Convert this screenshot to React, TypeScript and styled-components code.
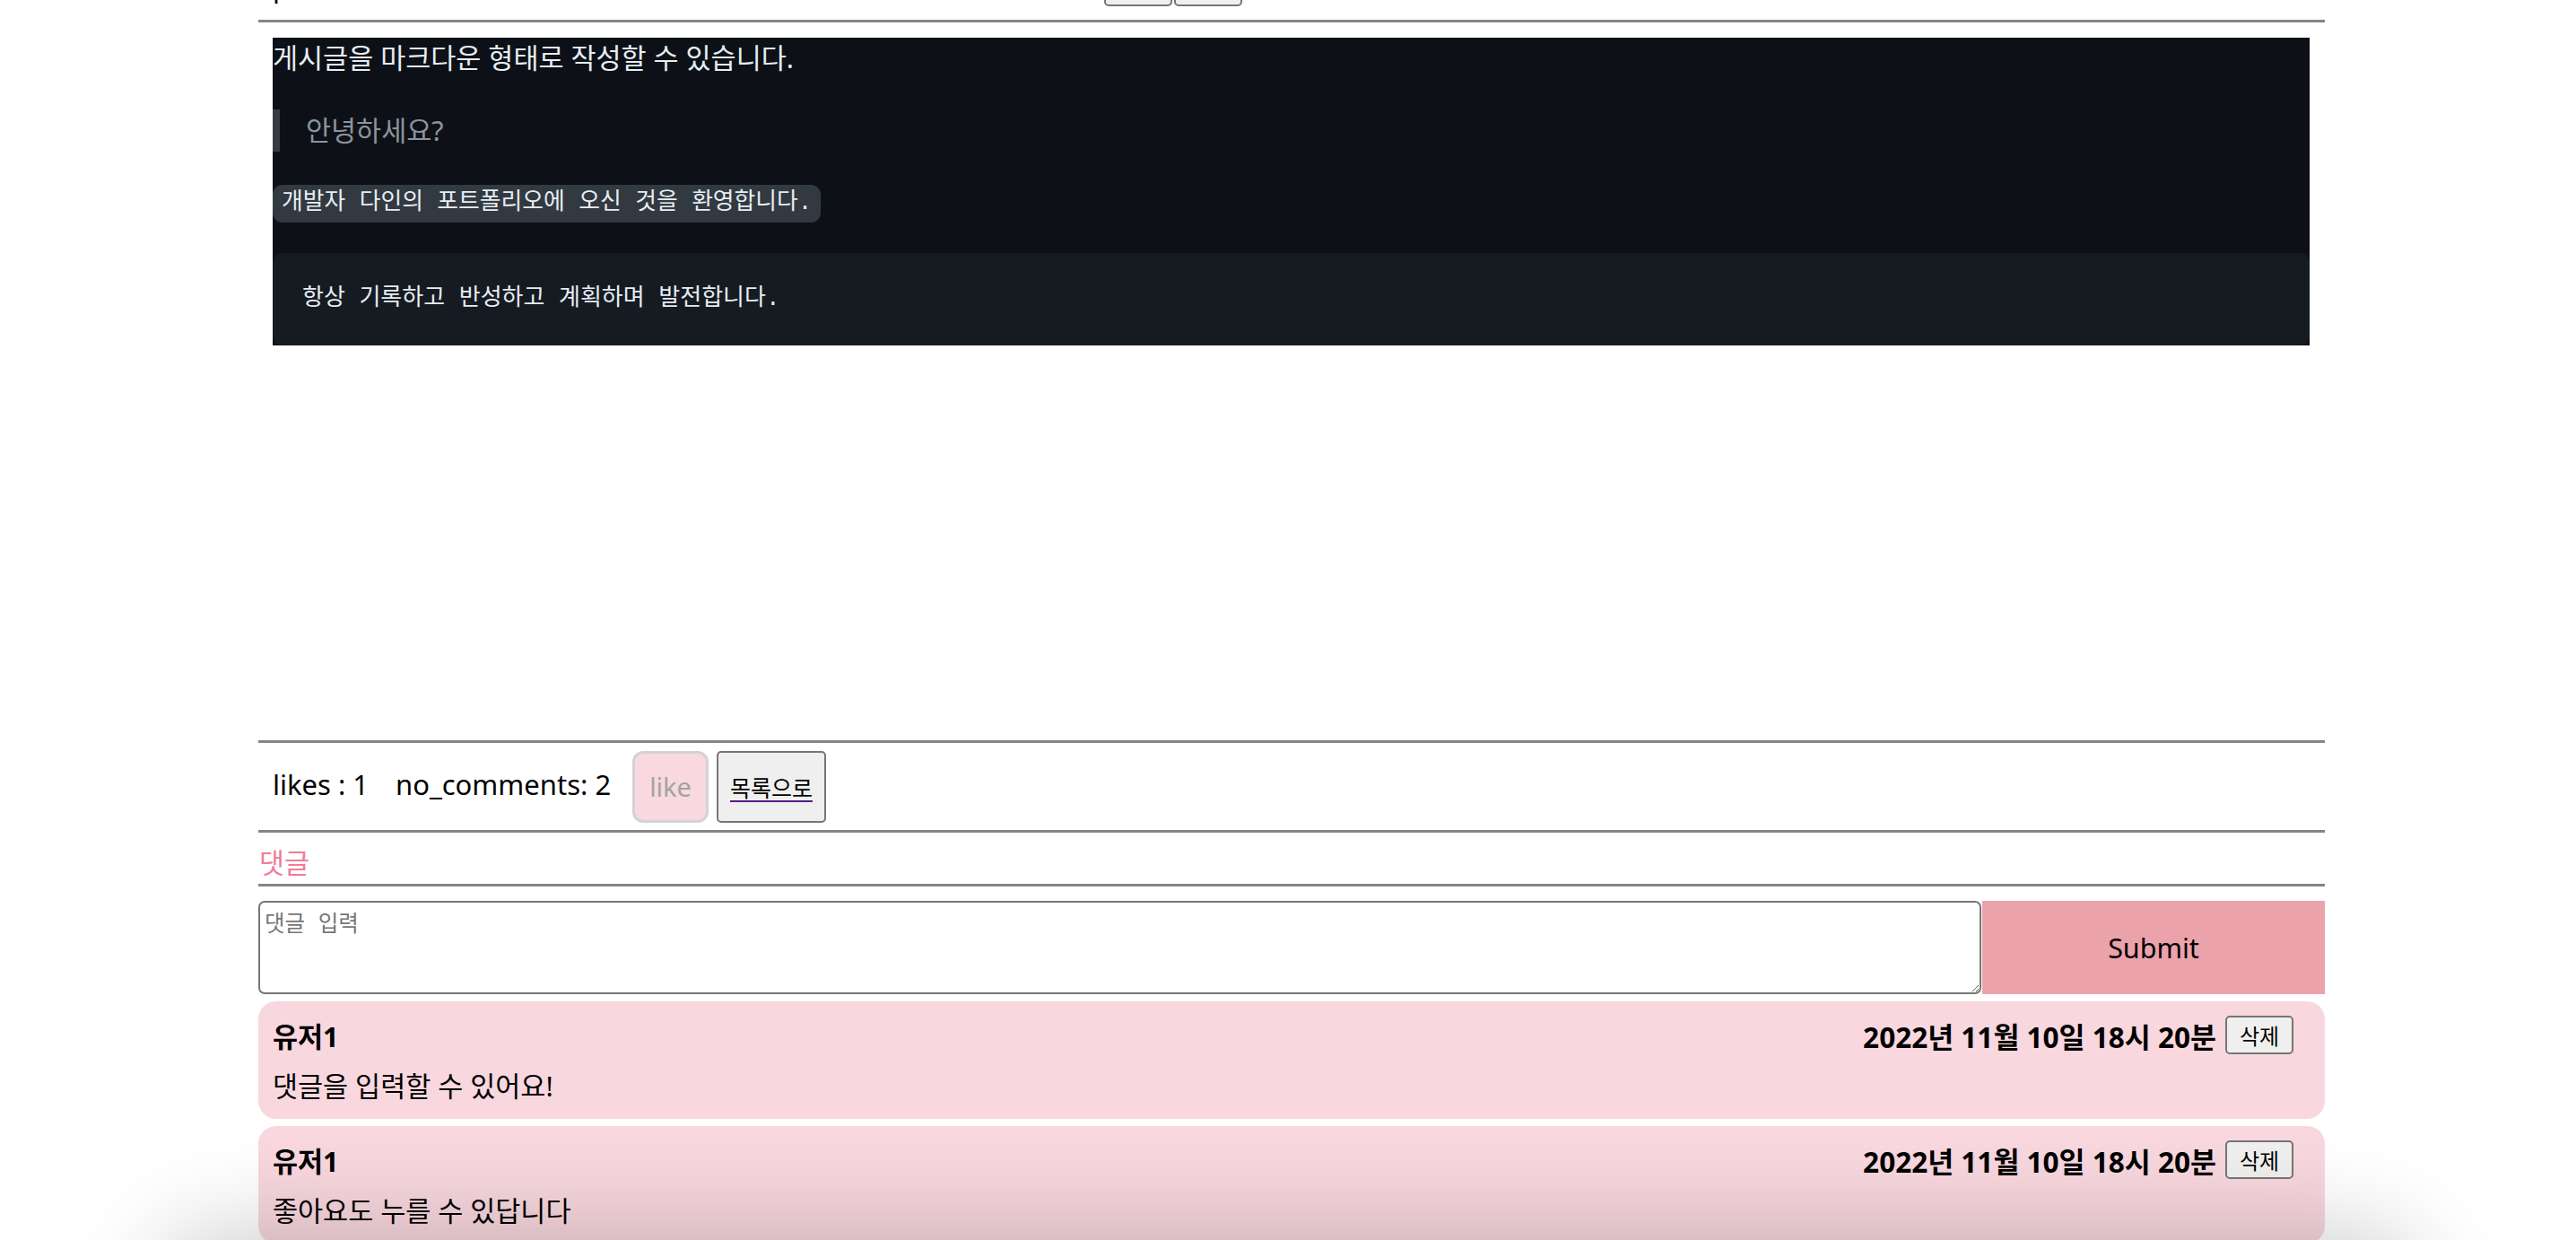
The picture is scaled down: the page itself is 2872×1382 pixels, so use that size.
import React from 'react';
import styled, { createGlobalStyle } from 'styled-components';

const GlobalStyle = createGlobalStyle`
  html, body {
    margin: 0;
    padding: 0;
    overflow: hidden;
    background: #ffffff;
  }
  body {
    font-family: "Noto Sans", "Noto Sans CJK KR", sans-serif;
    font-size: 30.5px;
    color: #000000;
  }
  * {
    box-sizing: border-box;
  }
`;

const Page = styled.div`
  width: 2304px;
  margin-left: 288px;
`;

// the post header is scrolled out of view, only its bottom edge remains
const PostHeader = styled.div`
  display: flex;
  align-items: center;
  height: 43px;
  margin-top: -36px;
  padding-left: 16px;
`;

const PostTitle = styled.span`
  flex: 0 0 927px;
  font-size: 30.5px;
  line-height: 43px;
`;

const SmallButton = styled.button`
  width: 76px;
  height: 43px;
  padding: 0;
  margin-right: 2px;
  background: #efefef;
  border: 2px solid #767676;
  border-radius: 5px;
  font-family: "Noto Sans", "Noto Sans CJK KR", sans-serif;
  font-size: 24px;
  color: #000000;
`;

const Rule = styled.div<{ $gap?: number }>`
  height: 3px;
  background: #858585;
  margin-top: ${(p) => p.$gap ?? 0}px;
`;

const ContentArea = styled.div`
  height: 800px;
  padding: 17px 17px 0 16px;
`;

const Preview = styled.div`
  background: #0d1117;
  color: #e6edf3;
  font-size: 30.5px;
  line-height: 44px;
`;

const Paragraph = styled.p`
  margin: 0 0 36px;
`;

const Quote = styled.blockquote`
  margin: 0 0 37px;
  padding: 0 29px;
  border-left: 8px solid #363b43;
  color: #8b949e;
  line-height: 47px;
`;

const CodeLine = styled.div`
  display: flex;
  margin-bottom: 34px;
`;

const InlineCode = styled.code`
  padding: 5px 10px;
  line-height: 32px;
  font-family: "Liberation Mono", "Noto Sans CJK KR", monospace;
  font-size: 25.8px;
  background: rgba(110, 118, 129, 0.4);
  border-radius: 11px;
`;

const CodeBlock = styled.pre`
  margin: 0;
  padding: 29px 33px;
  background: #161b22;
  border-radius: 11px;
  font-family: "Liberation Mono", "Noto Sans CJK KR", monospace;
  font-size: 26px;
  line-height: 45px;
`;

const StatsRow = styled.div`
  display: flex;
  align-items: center;
  height: 97px;
  padding-left: 16px;
`;

const Stat = styled.span<{ $space: number }>`
  font-size: 31px;
  margin-right: ${(p) => p.$space}px;
  margin-bottom: 6px;
`;

const LikeButton = styled.button`
  height: 80px;
  padding: 0 16px;
  margin-right: 9px;
  background: #f9d8df;
  border: 3px solid #d3d3d3;
  border-radius: 12px;
  font-family: "Noto Sans", "Noto Sans CJK KR", sans-serif;
  font-size: 29px;
  color: #a3a3a3;
`;

const BackButton = styled.button`
  height: 80px;
  padding: 0 13px;
  background: #efefef;
  border: 2px solid #767676;
  border-radius: 5px;
`;

const BackLink = styled.a`
  font-family: "Noto Sans", "Noto Sans CJK KR", sans-serif;
  font-size: 25px;
  color: #000000;
  text-decoration: underline;
  text-decoration-color: #551a8b;
  text-decoration-thickness: 2px;
  text-underline-offset: 4px;
`;

const CommentsTitle = styled.div`
  height: 57px;
  padding: 9px 1px 0;
  font-size: 30.5px;
  line-height: 48px;
  color: #f27b9a;
`;

const CommentForm = styled.form`
  display: flex;
  gap: 1px;
  height: 104px;
  margin-top: 16px;
`;

const CommentInput = styled.textarea`
  flex: 1;
  height: 104px;
  padding: 4px 5px;
  border: 2px solid #767676;
  border-radius: 7px;
  font-family: "Liberation Mono", "Noto Sans CJK KR", monospace;
  font-size: 24.5px;
  resize: vertical;

  &::placeholder {
    color: #767676;
  }
`;

const SubmitButton = styled.button`
  width: 382px;
  height: 104px;
  border: none;
  background: #eca2ab;
  font-family: "Noto Sans", "Noto Sans CJK KR", sans-serif;
  font-size: 30.5px;
  color: #000000;
`;

const CommentList = styled.div`
  display: flex;
  flex-direction: column;
  gap: 8px;
  margin-top: 8px;
`;

const CommentCard = styled.div`
  padding: 16px 33px 15px 16px;
  background: #f8d7de;
  border-radius: 20px;
`;

const CommentHead = styled.div`
  display: flex;
  align-items: center;
  justify-content: space-between;
  height: 43px;
`;

const Strong = styled.span<{ $size?: number }>`
  font-size: ${(p) => p.$size ?? 30.5}px;
  font-weight: 700;
`;

const HeadRight = styled.div`
  display: flex;
  align-items: center;
  gap: 10px;
`;

const CommentBody = styled.div`
  margin-top: 13px;
  font-size: 30.5px;
  line-height: 44px;
`;

// shadow of something just below the viewport, drawn over the page
const BottomShade = styled.div`
  position: fixed;
  left: 180px;
  right: 180px;
  bottom: -140px;
  height: 140px;
  border-radius: 70px;
  background: #ffffff;
  box-shadow: 0 0 110px 10px rgba(0, 0, 0, 0.2);
  pointer-events: none;
  z-index: 10;
`;

const comments = [
  { user: '유저1', date: '2022년 11월 10일 18시 20분', text: '댓글을 입력할 수 있어요!' },
  { user: '유저1', date: '2022년 11월 10일 18시 20분', text: '좋아요도 누를 수 있답니다' },
];

export default function App() {
  return (
    <>
      <GlobalStyle />
      <Page>
        <PostHeader>
          <PostTitle>portfolio</PostTitle>
          <SmallButton>수정</SmallButton>
          <SmallButton>삭제</SmallButton>
        </PostHeader>
        <Rule $gap={15} />
        <ContentArea>
          <Preview>
            <Paragraph>게시글을 마크다운 형태로 작성할 수 있습니다.</Paragraph>
            <Quote>안녕하세요?</Quote>
            <CodeLine>
              <InlineCode>개발자 다인의 포트폴리오에 오신 것을 환영합니다.</InlineCode>
            </CodeLine>
            <CodeBlock>항상 기록하고 반성하고 계획하며 발전합니다.</CodeBlock>
          </Preview>
        </ContentArea>
        <Rule />
        <StatsRow>
          <Stat $space={30}>likes : 1</Stat>
          <Stat $space={24}>no_comments: 2</Stat>
          <LikeButton>like</LikeButton>
          <BackButton>
            <BackLink href="#">목록으로</BackLink>
          </BackButton>
        </StatsRow>
        <Rule />
        <CommentsTitle>댓글</CommentsTitle>
        <Rule />
        <CommentForm onSubmit={(e) => e.preventDefault()}>
          <CommentInput placeholder="댓글 입력" />
          <SubmitButton type="submit">Submit</SubmitButton>
        </CommentForm>
        <CommentList>
          {comments.map((c, i) => (
            <CommentCard key={i}>
              <CommentHead>
                <Strong>{c.user}</Strong>
                <HeadRight>
                  <Strong $size={31.5}>{c.date}</Strong>
                  <SmallButton>삭제</SmallButton>
                </HeadRight>
              </CommentHead>
              <CommentBody>{c.text}</CommentBody>
            </CommentCard>
          ))}
        </CommentList>
      </Page>
      <BottomShade />
    </>
  );
}
